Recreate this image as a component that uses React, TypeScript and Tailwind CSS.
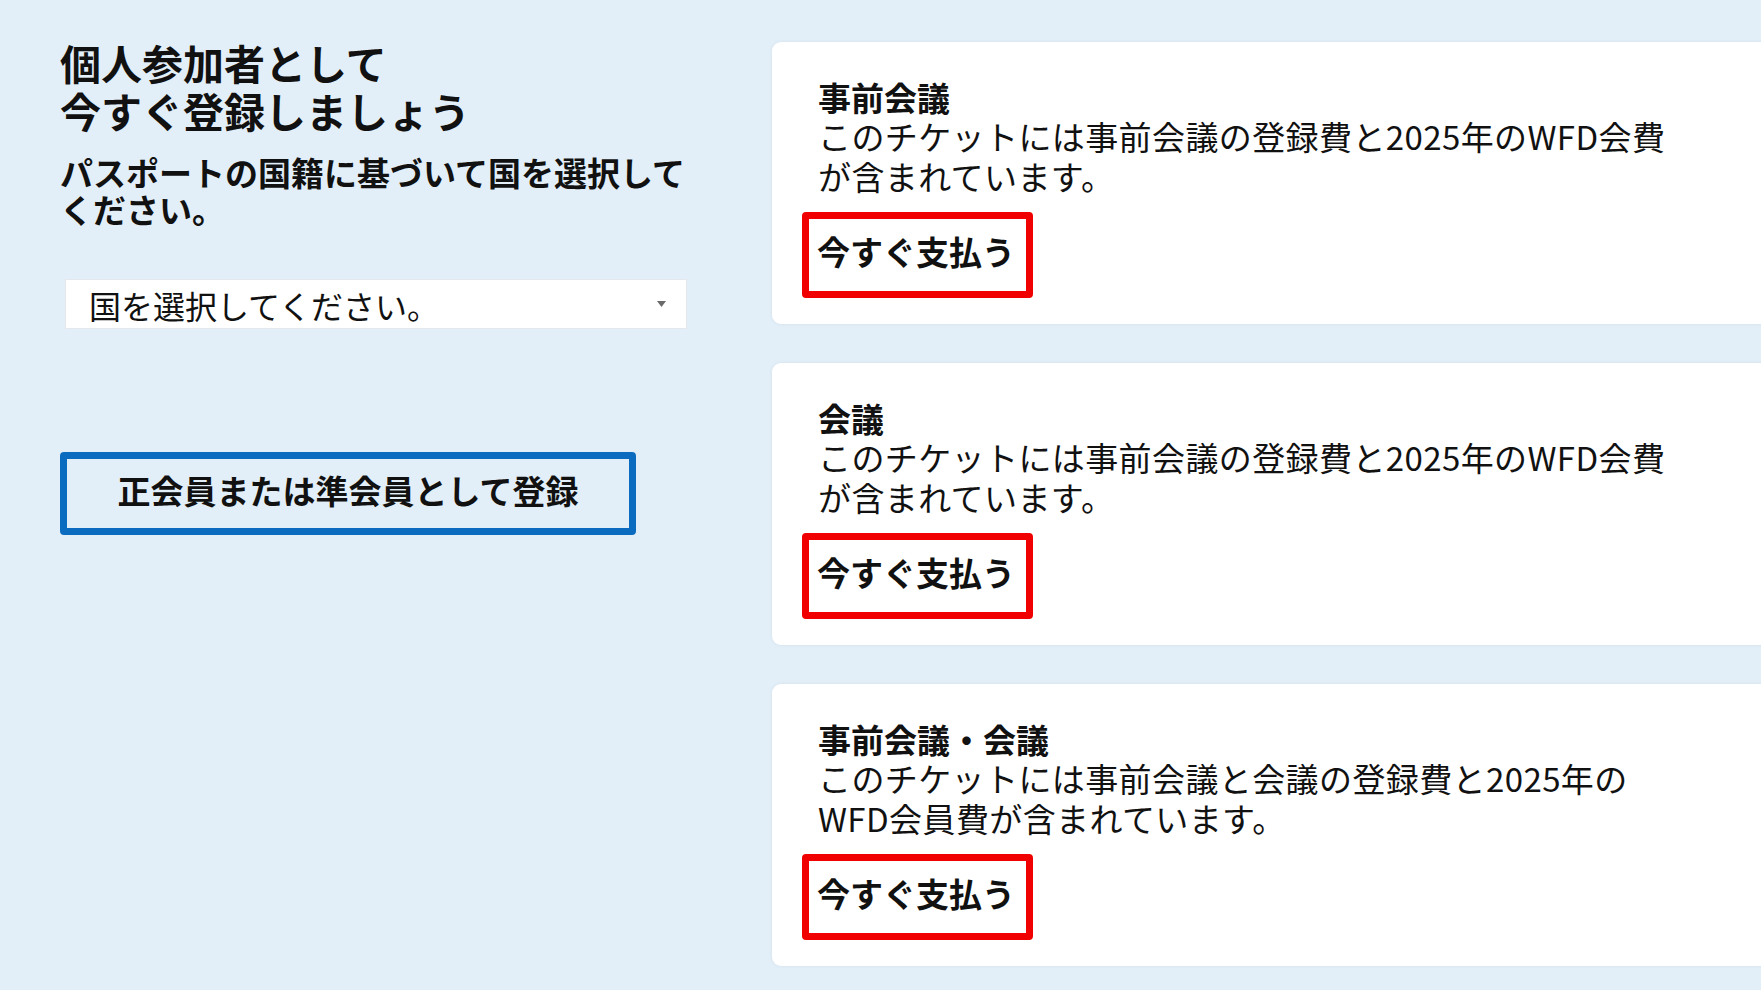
const jp = { fontFamily: '"Noto Sans CJK JP", "Noto Sans", sans-serif' };

type Ticket = { title: string; lines: string[] };

const tickets: Ticket[] = [
  {
    title: '事前会議',
    lines: ['このチケットには事前会議の登録費と2025年のWFD会費', 'が含まれています。'],
  },
  {
    title: '会議',
    lines: ['このチケットには事前会議の登録費と2025年のWFD会費', 'が含まれています。'],
  },
  {
    title: '事前会議・会議',
    lines: ['このチケットには事前会議と会議の登録費と2025年の', 'WFD会員費が含まれています。'],
  },
];

function TicketCard({ ticket }: { ticket: Ticket }) {
  return (
    <div className="bg-white rounded-[9px] shadow-[0_0_4px_rgba(0,0,0,0.06)] h-[282px] pt-[36px] pl-[46px] pr-10 text-[#111]">
      <h3 className="text-[33px] font-bold leading-[38px]">{ticket.title}</h3>
      <p className="text-[33px] leading-[40px] tracking-[0.4px]">
        {ticket.lines[0]}
        <br />
        {ticket.lines[1]}
      </p>
      <button className="mt-[16px] -ml-[16px] w-[231px] h-[86px] border-[7px] border-[#f00000] rounded-[4px] bg-white text-left pl-[8px] pt-[12px] flex items-start">
        <span className="text-[33px] font-bold leading-[40px] text-[#111]">今すぐ支払う</span>
      </button>
    </div>
  );
}

export default function App() {
  return (
    <div className="w-full h-[990px] overflow-hidden bg-[#e3eff8]" style={jp}>
      <div className="flex pt-[42px]">
        {/* left column */}
        <div className="w-[772px] shrink-0 pl-[60px] pr-[85px]">
          <h1 className="text-[41px] font-bold leading-[48px] text-[#111] -mt-[4px]">
            個人参加者として
            <br />
            今すぐ登録しましょう
          </h1>
          <p className="mt-[20px] text-[33px] font-bold leading-[37px] text-[#111]">
            パスポートの国籍に基づいて国を選択して
            <br />
            ください。
          </p>

          <div className="mt-[51px] ml-[5px] h-[50px] w-[622px] bg-white border border-[#e4e8ec] flex items-center justify-between pl-[23px] pr-[20px]">
            <span className="text-[32px] leading-none text-[#111] pt-[2px]">国を選択してください。</span>
            <svg width="9" height="6" viewBox="0 0 9 6">
              <path d="M0 0h9L4.5 6z" fill="#6b6b6b" />
            </svg>
          </div>

          <button className="mt-[123px] w-[576px] h-[83px] border-[7px] border-[#0b6cbf] rounded-[4px] flex items-center justify-center pb-[6px]">
            <span className="text-[33px] font-bold leading-none text-[#111]">正会員または準会員として登録</span>
          </button>
        </div>

        {/* right column */}
        <div className="flex-1 -mr-[40px] flex flex-col gap-[39px]">
          {tickets.map((t) => (
            <TicketCard key={t.title} ticket={t} />
          ))}
        </div>
      </div>
    </div>
  );
}
